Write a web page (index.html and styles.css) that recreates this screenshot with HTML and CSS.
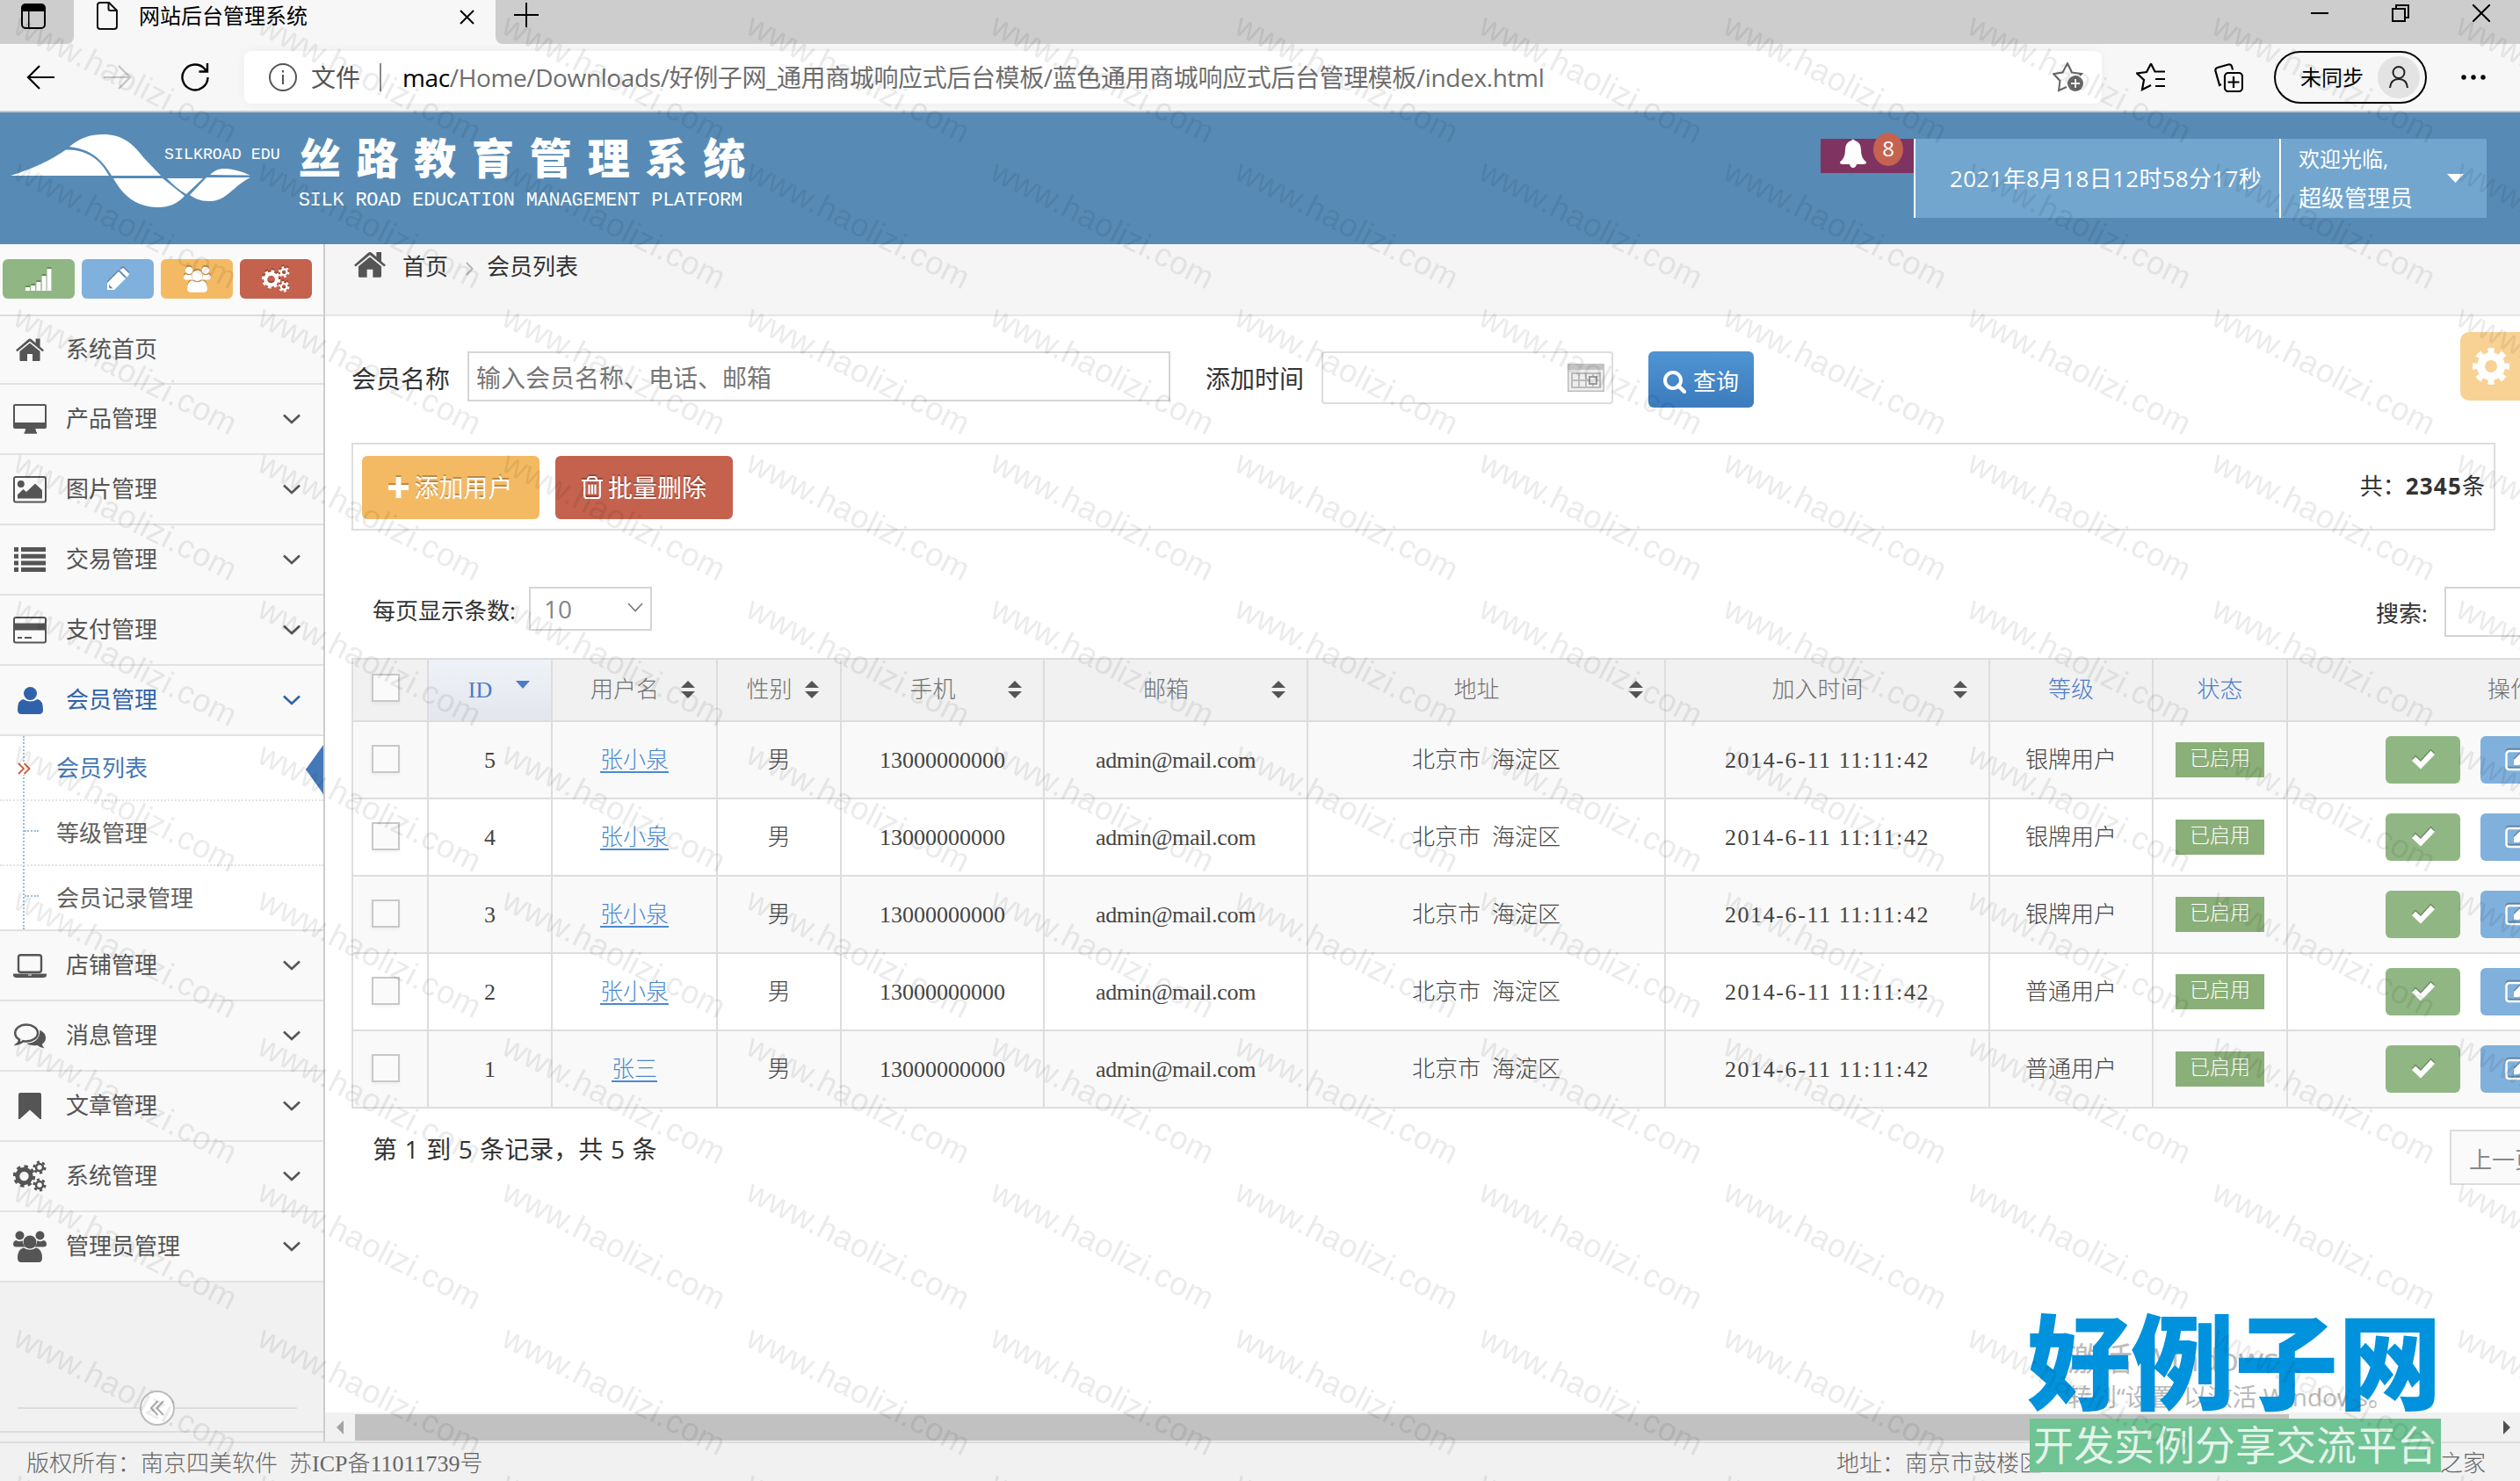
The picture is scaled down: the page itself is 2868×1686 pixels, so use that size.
FILE: index.html
```html
<!DOCTYPE html>
<html lang="zh-CN">
<head>
    <meta charset="UTF-8">
    <title>网站后台管理系统</title>
    <link rel="stylesheet" href="styles.css">
</head>
<body>
    <!-- shared icons -->
    <svg width="0" height="0" class="defs">
        <symbol id="i-home" viewBox="0 0 32 26"><path d="M0 13.6L14 1.4q2-1.6 4 0l4.6 4V.6h5v9.2l4.4 3.8-1.6 1.7L16 3.4 1.6 15.3zM4.4 15L16 5.4 27.6 15v10q0 1-1 1H19v-8h-6v8H5.4q-1 0-1-1z"/></symbol>
        <symbol id="i-desktop" viewBox="0 0 38 34"><path fill-rule="evenodd" d="M2 0h34q2 0 2 2v24q0 2-2 2H25.500q0 3 1.500 4.500v1.200H12.500v-1.200q1.500-1.500 1.500-4.500H2q-2 0-2-2V2q0-2 2-2zM2 2v19h34V2z"/></symbol>
        <symbol id="i-image" viewBox="0 0 38 31"><rect x="1" y="1" width="36" height="28.500" rx="2" fill="none" stroke="currentColor" stroke-width="2"/><circle cx="8.800" cy="9" r="4"/><path d="M5 25.500v-4.500l6.500-6 3.500 3 10-9.500 8 7.500v9.500z"/></symbol>
        <symbol id="i-list" viewBox="0 0 36 28"><path d="M0 0h5v5H0zM8 0h28v5H8zM0 7.700h5v5H0zM8 7.700h28v5H8zM0 15.400h5v5H0zM8 15.400h28v5H8zM0 23h5v5H0zM8 23h28v5H8z"/></symbol>
        <symbol id="i-card" viewBox="0 0 38 31"><rect x="1" y="1" width="36" height="28.500" rx="2" fill="none" stroke="currentColor" stroke-width="2"/><path d="M1 7.500h36v8H1zM5 23h5v2H5zM13 23h8v2h-8z"/></symbol>
        <symbol id="i-user" viewBox="0 0 29 31"><circle cx="14.500" cy="7.500" r="7.500"/><path d="M6.500 14q8 5 16 0 6.500 1 6.500 12 0 5-4.500 5H4.500Q0 31 0 26q0-11 6.500-12z"/></symbol>
        <symbol id="i-laptop" viewBox="0 0 38 27"><rect x="6" y="1.200" width="26" height="19.500" rx="2.500" fill="none" stroke="currentColor" stroke-width="2.400"/><path fill-rule="evenodd" d="M0 22.500h38v1.500q0 3-4 3H4q-4 0-4-3zm17 1v1h4v-1z"/></symbol>
        <symbol id="i-comments" viewBox="0 0 36 29"><path d="M14 1.500C21 1.500 27 5.500 27 11s-6 9.500-13 9.500q-2 0-3.500-.3Q7.500 23 3.500 23.500 6 21.500 6 18.500 1.200 15.500 1.200 11C1.200 5.500 7 1.500 14 1.500z" fill="none" stroke="currentColor" stroke-width="2.500"/><path d="M29.500 7.500q6.500 3.500 6.500 9 0 4.500-4 7 0 3 2.500 5-4.500-.5-8-3.500-8 1-12.500-2.200Q29 22.500 29.500 7.500z"/></symbol>
        <symbol id="i-bookmark" viewBox="0 0 26 30"><path d="M2 0h22q2 0 2 2v28h-1.500L13 19.500 1.500 30H0V2q0-2 2-2z"/></symbol>
        <symbol id="i-cogs" viewBox="0 0 38 36">
            <g fill="none" stroke="currentColor">
                <circle cx="12.500" cy="18" r="7.700" stroke-width="5"/><circle cx="12.500" cy="18" r="11" pathLength="16" stroke-dasharray="1 1" stroke-width="3.500"/>
                <circle cx="30" cy="8" r="4" stroke-width="2.600"/><circle cx="30" cy="8" r="6.300" pathLength="12" stroke-dasharray="1 1" stroke-width="2.500"/>
                <circle cx="30" cy="28" r="4" stroke-width="2.600"/><circle cx="30" cy="28" r="6.300" pathLength="12" stroke-dasharray="1 1" stroke-width="2.500"/>
            </g>
        </symbol>
        <symbol id="i-users" viewBox="0 0 38 36"><circle cx="7.500" cy="5.500" r="5"/><circle cx="30.500" cy="5.500" r="5"/><circle cx="19" cy="13" r="7.500"/><path d="M3.500 11q4 2.500 7 0 .3 5 3.500 7.500H3.500Q0 18.500 0 15.500q0-4 3.500-4.500zM34.500 11q-4 2.500-7 0-.3 5-3.500 7.500h10.500q3.500 0 3.500-3 0-4-3.500-4.500zM12 19.500q7 4.500 14 0 7 1.500 7 11.500 0 5-4 5H9q-4 0-4-5 0-10 7-11.500z"/></symbol>
        <symbol id="i-gear" viewBox="0 0 42 42"><g fill="none" stroke="currentColor"><circle cx="21" cy="21" r="11.500" stroke-width="9"/><circle cx="21" cy="21" r="18" pathLength="160" stroke-dasharray="10 10" stroke-dashoffset="5" stroke-width="6"/></g></symbol>
        <symbol id="i-down" viewBox="0 0 20 12"><path d="M1 1.500l9 8.500 9-8.500" fill="none" stroke="currentColor" stroke-width="2.600"/></symbol>
        <symbol id="i-sort" viewBox="0 0 16 20"><path d="M0 8l8-8 8 8zM0 12l8 8 8-8z"/></symbol>
        <symbol id="i-check" viewBox="0 0 26 22"><path d="M0 12l4-4.500 6 5.500L21.500.5 26 5 10 21.500z"/></symbol>
        <symbol id="i-edit" viewBox="0 0 30 26"><path d="M22 3H5Q1.500 3 1.500 6.500v14Q1.500 24 5 24h14q3.500 0 3.500-3.500V17" fill="none" stroke="currentColor" stroke-width="2.600"/><path d="M10 19v-6L22.500 1l6 6L16 19z"/></symbol>
        <symbol id="i-trash" viewBox="0 0 24 26"><path d="M0 5h24M7 5q0-4 3-4h4q3 0 3 4M3.200 5v17q0 3 2.500 3h12.600q2.500 0 2.500-3V5M8.500 9.500v11M12 9.500v11M15.500 9.500v11" fill="none" stroke="currentColor" stroke-width="2.200"/></symbol>
    </svg>

    <div class="page">
        <!-- browser window -->
        <div class="titlebar">
            <div class="tab-menu"><svg width="28" height="29" viewBox="0 0 28 29"><rect x="1" y="1" width="26" height="27" rx="4" fill="none" stroke="#000" stroke-width="2"/><path d="M1 4q0-3 3-3h20q3 0 3 3v5H1zM8 9h1.500v19H8z"/></svg></div>
            <div class="browser-tab">
                <svg width="24" height="32" viewBox="0 0 24 32"><path d="M4 1h10l9 9v18q0 3-3 3H4q-3 0-3-3V4q0-3 3-3zM13.500 1v7q0 2 2 2H23" fill="none" stroke="#111" stroke-width="2"/></svg>
                <span>网站后台管理系统</span>
                <svg width="17" height="17" viewBox="0 0 17 17"><path d="M1 1l15 15M16 1L1 16" stroke="#000" stroke-width="2"/></svg>
            </div>
            <svg class="tab-add" width="28" height="28" viewBox="0 0 28 28"><path d="M14 0v28M0 14h28" stroke="#000" stroke-width="2"/></svg>
            <div class="win-btns">
                <svg width="20" height="20" viewBox="0 0 20 20"><path d="M0 10h20" stroke="#000" stroke-width="2"/></svg>
                <svg width="20" height="20" viewBox="0 0 20 20"><path d="M1 5h14v14H1zM5 5V1h14v14h-4" fill="none" stroke="#000" stroke-width="2"/></svg>
                <svg width="20" height="20" viewBox="0 0 20 20"><path d="M0 0l20 20M20 0L0 20" stroke="#000" stroke-width="2"/></svg>
            </div>
        </div>
        <div class="toolbar">
            <div class="nav-btns">
                <svg width="32" height="28" viewBox="0 0 32 28"><path d="M32 14H2M15 1L2 14l13 13" fill="none" stroke="#000" stroke-width="2.200"/></svg>
                <svg width="32" height="28" viewBox="0 0 32 28"><path d="M0 14h30M17 1l13 13-13 13" fill="none" stroke="#c4c4c4" stroke-width="2.200"/></svg>
                <svg width="32" height="32" viewBox="0 0 32 32"><path d="M30.500 16A14.500 14.500 0 1 1 27 6.500l2.500 3M30 0v9.500h-9.500" fill="none" stroke="#000" stroke-width="2.400"/></svg>
            </div>
            <div class="address">
                <svg width="32" height="32" viewBox="0 0 32 32"><circle cx="16" cy="16" r="15" fill="none" stroke="#555" stroke-width="2"/><path d="M15 13h2v11h-2zM15 8h2v2.500h-2z" fill="#555"/></svg>
                <span class="scheme">文件</span>
                <span class="url"><b>mac</b>/Home/Downloads/好例子网_通用商城响应式后台模板/蓝色通用商城响应式后台管理模板/index.html</span>
                <svg width="36" height="34" viewBox="0 0 36 34"><path d="M16 28l-9 4 1.500-11L1 13l10.500-1.500L17 1l5 10.500L33 13l-2 2" fill="none" stroke="#666" stroke-width="2"/><circle cx="26" cy="24" r="9" fill="#666"/><path d="M26 19v10M21 24h10" stroke="#fff" stroke-width="2"/></svg>
            </div>
            <svg class="tool-fav" width="34" height="32" viewBox="0 0 34 32"><path d="M17 25l-10 5 2-11-8-7.500 11-1.500 5-9.500 4.500 9H33M22 18h11M22 26h11" fill="none" stroke="#000" stroke-width="2.200"/></svg>
            <svg class="tool-col" width="33" height="33" viewBox="0 0 33 33"><rect x="12" y="11" width="20" height="21" rx="4" fill="none" stroke="#000" stroke-width="2.200"/><path d="M22 15v13M15.500 21.500h13M8 24L6 25 1.500 9q-.8-3 2-4L16 1.500q3-.7 4 2l1 4" fill="none" stroke="#000" stroke-width="2.200"/></svg>
            <div class="profile">
                <span>未同步</span>
                <i><svg width="24" height="26" viewBox="0 0 24 26"><circle cx="12" cy="7.500" r="6.500" fill="none" stroke="#222" stroke-width="2"/><path d="M2 25q1-10 10-10t10 10" fill="none" stroke="#222" stroke-width="2"/></svg></i>
            </div>
            <svg class="tool-more" width="28" height="6" viewBox="0 0 28 6"><circle cx="3" cy="3" r="2.700"/><circle cx="14" cy="3" r="2.700"/><circle cx="25" cy="3" r="2.700"/></svg>
        </div>

        <!-- header -->
        <div class="header">
            <div class="brand">
                <svg class="brand-mark" width="274" height="84" viewBox="0 0 274 84">
                    <path fill="#fff" d="M0 47C25 39 45 30 63 17.500 88 17 103 30 112 47z"/>
                    <path fill="#fff" d="M67 14C80 3 92 0 105 0c22 0 34 10 46 26l20 21H115C105 30 93 17 67 14z"/>
                    <path fill="#fff" d="M117 50h56l25 20c-8 9-18 13-30 13-28 0-42-17-51-33z"/>
                    <path fill="#fff" d="M178 50h41l-19 18c-9-5-16-12-22-18zM227 46c6-6 11-7 17-7 10 0 20 4 29 7.500z"/>
                    <path fill="#fff" d="M223 49h50c-23 12-26 27-48 27-9 0-15-3-21-7z"/>
                </svg>
                <span class="brand-en">SILKROAD EDU</span>
                <div class="brand-text">
                    <div class="brand-title">丝路教育管理系统</div>
                    <div class="brand-sub">SILK ROAD EDUCATION MANAGEMENT PLATFORM</div>
                </div>
            </div>
            <div class="header-right">
                <div class="bell">
                    <svg width="30" height="34" viewBox="0 0 30 34"><path fill="#fff" d="M13 2q2-3 4 0 7 2 7 11 0 9 6 13.500Q30 29 27 29H19q-1 4-4 4t-4-4H3q-3 0-3-2.500Q6 22 6 13 6 4 13 2z"/></svg>
                    <span>8</span>
                </div>
                <div class="date">2021年8月18日12时58分17秒</div>
                <div class="welcome">
                    <div><small>欢迎光临,</small><br>超级管理员</div>
                    <svg width="19" height="10" viewBox="0 0 19 10"><path d="M0 0h19l-9.500 10z" fill="#fff"/></svg>
                </div>
            </div>
        </div>

        <div class="main">
            <div class="sidebar">
                <div class="shortcuts">
                    <span class="btn-green"><svg width="30" height="26" viewBox="0 0 30 26"><path d="M0 22h5v4H0zM6.200 20h5v6h-5zM12.400 16h5v10h-5zM18.600 9h5v17h-5zM24.500 1h5v25h-5z"/></svg></span>
                    <span class="btn-blue"><svg width="26" height="26" viewBox="0 0 26 26"><path fill-rule="evenodd" d="M1 25v-8L14 4l8 8L9 25zM15.500 2.700L18 .5q1-1 2 0L25.500 6q1 1 0 2l-2 2.500zM3 18.500V22l1.500 1.500h3z"/></svg></span>
                    <span class="btn-orange"><svg width="31" height="30"><use href="#i-users"/></svg></span>
                    <span class="btn-red"><svg width="32" height="30"><use href="#i-cogs"/></svg></span>
                </div>
                <ul class="nav">
                    <li><a class="first"><i><svg width="32" height="26"><use href="#i-home"/></svg></i><span>系统首页</span></a></li>
                    <li><a><i><svg width="38" height="34"><use href="#i-desktop"/></svg></i><span>产品管理</span><svg width="20" height="12"><use href="#i-down"/></svg></a></li>
                    <li><a><i><svg width="38" height="31"><use href="#i-image"/></svg></i><span>图片管理</span><svg width="20" height="12"><use href="#i-down"/></svg></a></li>
                    <li><a><i><svg width="36" height="28"><use href="#i-list"/></svg></i><span>交易管理</span><svg width="20" height="12"><use href="#i-down"/></svg></a></li>
                    <li><a><i><svg width="38" height="31"><use href="#i-card"/></svg></i><span>支付管理</span><svg width="20" height="12"><use href="#i-down"/></svg></a></li>
                    <li class="open"><a><i><svg width="29" height="31"><use href="#i-user"/></svg></i><span>会员管理</span><svg width="20" height="12"><use href="#i-down"/></svg></a>
                        <ul class="submenu">
                            <li class="active"><svg width="15" height="14" viewBox="0 0 15 14"><path d="M1 1l6 6-6 6M7.500 1l6 6-6 6" fill="none" stroke="#c86139" stroke-width="1.800"/></svg>会员列表</li>
                            <li>等级管理</li>
                            <li>会员记录管理</li>
                        </ul>
                    </li>
                    <li><a><i><svg width="38" height="27"><use href="#i-laptop"/></svg></i><span>店铺管理</span><svg width="20" height="12"><use href="#i-down"/></svg></a></li>
                    <li><a><i><svg width="36" height="29"><use href="#i-comments"/></svg></i><span>消息管理</span><svg width="20" height="12"><use href="#i-down"/></svg></a></li>
                    <li><a><i><svg width="26" height="30"><use href="#i-bookmark"/></svg></i><span>文章管理</span><svg width="20" height="12"><use href="#i-down"/></svg></a></li>
                    <li><a><i><svg width="38" height="36"><use href="#i-cogs"/></svg></i><span>系统管理</span><svg width="20" height="12"><use href="#i-down"/></svg></a></li>
                    <li><a><i><svg width="38" height="36"><use href="#i-users"/></svg></i><span>管理员管理</span><svg width="20" height="12"><use href="#i-down"/></svg></a></li>
                </ul>
                <div class="collapse"><i><svg width="16" height="18" viewBox="0 0 16 18"><path d="M8.500 1L1 9l7.500 8M15 1L7.500 9l7.500 8" fill="none" stroke="#aaa" stroke-width="2"/></svg></i></div>
            </div>

            <div class="content">
                <div class="breadcrumb">
                    <svg width="36" height="30"><use href="#i-home"/></svg>
                    <span>首页</span>
                    <svg width="9" height="16" viewBox="0 0 9 16"><path d="M1 1l6.500 7L1 15" fill="none" stroke="#b2b6bf" stroke-width="2"/></svg>
                    <span>会员列表</span>
                </div>

                <div class="search">
                    <label>会员名称</label>
                    <input class="name" type="text" placeholder="输入会员名称、电话、邮箱">
                    <label>添加时间</label>
                    <div class="datebox"><svg width="42" height="32" viewBox="0 0 42 32"><rect x=".7" y=".7" width="40.600" height="30.600" fill="#eee" stroke="#bbb" stroke-width="1.500"/><path fill="#c4c4c4" d="M0 0h42v7H0z"/><path d="M5 11h32v16H5zM5 19h32M13 11v16M21 11v16M29 11v16" fill="none" stroke="#bbb" stroke-width="2"/><rect x="25" y="15" width="8" height="8" fill="#eee" stroke="#999" stroke-width="2"/></svg></div>
                    <button class="query"><svg width="26" height="26" viewBox="0 0 26 26"><circle cx="11" cy="11" r="9" fill="none" stroke="#fff" stroke-width="4"/><path d="M17 17l7 7" stroke="#fff" stroke-width="4.500" stroke-linecap="round"/></svg>查询</button>
                </div>

                <div class="actions">
                    <button class="btn-orange"><svg width="23" height="24" viewBox="0 0 23 24"><path d="M8.500 0h6v9H23v6h-8.500v9h-6v-9H0V9h8.500z"/></svg>添加用户</button>
                    <button class="btn-red"><svg width="24" height="26"><use href="#i-trash"/></svg>批量删除</button>
                    <span class="total">共：<b>2345</b>条</span>
                </div>

                <div class="table-top">
                    <span>每页显示条数:</span>
                    <div class="length">10<svg width="18" height="11" viewBox="0 0 18 11"><path d="M1 1l8 8.500L17 1" fill="none" stroke="#777" stroke-width="1.600"/></svg></div>
                    <span class="search-label">搜索:</span>
                    <input type="text">
                </div>

                <table>
                    <colgroup><col class="c1"><col class="c2"><col class="c3"><col class="c4"><col class="c5"><col class="c6"><col class="c7"><col class="c8"><col class="c9"><col class="c10"><col class="c11"></colgroup>
                    <thead>
                        <tr>
                            <th><i class="check"></i></th>
                            <th class="sorted"><div class="sort">ID<svg width="16" height="20" viewBox="0 0 16 20"><path d="M0 0h16l-8 9z"/></svg></div></th>
                            <th><div class="sort">用户名<svg width="16" height="20"><use href="#i-sort"/></svg></div></th>
                            <th><div class="sort">性别<svg width="16" height="20"><use href="#i-sort"/></svg></div></th>
                            <th><div class="sort">手机<svg width="16" height="20"><use href="#i-sort"/></svg></div></th>
                            <th><div class="sort">邮箱<svg width="16" height="20"><use href="#i-sort"/></svg></div></th>
                            <th><div class="sort">地址<svg width="16" height="20"><use href="#i-sort"/></svg></div></th>
                            <th><div class="sort">加入时间<svg width="16" height="20"><use href="#i-sort"/></svg></div></th>
                            <th class="blue">等级</th>
                            <th class="blue">状态</th>
                            <th>操作</th>
                        </tr>
                    </thead>
                    <tbody>
                        <tr><td><i class="check"></i></td><td>5</td><td><u>张小泉</u></td><td>男</td><td>13000000000</td><td class="mail">admin@mail.com</td><td>北京市<s></s>海淀区</td><td class="time">2014-6-11 11:11:42</td><td>银牌用户</td><td><span class="badge">已启用</span></td><td class="ops"><span class="btn-green"><svg width="26" height="22"><use href="#i-check"/></svg></span><span class="btn-blue"><svg width="30" height="26"><use href="#i-edit"/></svg></span></td></tr>
                        <tr><td><i class="check"></i></td><td>4</td><td><u>张小泉</u></td><td>男</td><td>13000000000</td><td class="mail">admin@mail.com</td><td>北京市<s></s>海淀区</td><td class="time">2014-6-11 11:11:42</td><td>银牌用户</td><td><span class="badge">已启用</span></td><td class="ops"><span class="btn-green"><svg width="26" height="22"><use href="#i-check"/></svg></span><span class="btn-blue"><svg width="30" height="26"><use href="#i-edit"/></svg></span></td></tr>
                        <tr><td><i class="check"></i></td><td>3</td><td><u>张小泉</u></td><td>男</td><td>13000000000</td><td class="mail">admin@mail.com</td><td>北京市<s></s>海淀区</td><td class="time">2014-6-11 11:11:42</td><td>银牌用户</td><td><span class="badge">已启用</span></td><td class="ops"><span class="btn-green"><svg width="26" height="22"><use href="#i-check"/></svg></span><span class="btn-blue"><svg width="30" height="26"><use href="#i-edit"/></svg></span></td></tr>
                        <tr><td><i class="check"></i></td><td>2</td><td><u>张小泉</u></td><td>男</td><td>13000000000</td><td class="mail">admin@mail.com</td><td>北京市<s></s>海淀区</td><td class="time">2014-6-11 11:11:42</td><td>普通用户</td><td><span class="badge">已启用</span></td><td class="ops"><span class="btn-green"><svg width="26" height="22"><use href="#i-check"/></svg></span><span class="btn-blue"><svg width="30" height="26"><use href="#i-edit"/></svg></span></td></tr>
                        <tr><td><i class="check"></i></td><td>1</td><td><u>张三</u></td><td>男</td><td>13000000000</td><td class="mail">admin@mail.com</td><td>北京市<s></s>海淀区</td><td class="time">2014-6-11 11:11:42</td><td>普通用户</td><td><span class="badge">已启用</span></td><td class="ops"><span class="btn-green"><svg width="26" height="22"><use href="#i-check"/></svg></span><span class="btn-blue"><svg width="30" height="26"><use href="#i-edit"/></svg></span></td></tr>
                    </tbody>
                </table>

                <div class="table-bottom">
                    <span>第 1 到 5 条记录，共 5 条</span>
                    <div class="prev">上一页</div>
                </div>

                <div class="hscroll">
                    <svg width="8" height="16" viewBox="0 0 8 16"><path d="M8 0v16L0 8z" fill="#a3a3a3"/></svg>
                    <div class="thumb"></div>
                    <svg width="8" height="16" viewBox="0 0 8 16"><path d="M0 0v16l8-8z" fill="#505050"/></svg>
                </div>

                <div class="settings"><svg width="42" height="42"><use href="#i-gear"/></svg></div>
            </div>
        </div>

        <div class="footer">
            <span>版权所有：南京四美软件<s></s>苏ICP备11011739号</span>
            <span class="addr"><span>地址：南京市鼓楼区</span><span>之家</span></span>
        </div>

        <div class="activate">
            <div>激活 Windows</div>
            <p>转到“设置”以激活 Windows。</p>
        </div>
        <div class="site-logo">
            <div>好例子网</div>
            <p>开发实例分享交流平台</p>
        </div>

        <svg class="watermark" width="2868" height="1686">
            <pattern id="wm" width="278" height="166" patternUnits="userSpaceOnUse">
                <text x="0" y="0" transform="translate(13 37) rotate(27)" textLength="279" font-size="37">www.haolizi.com</text>
            </pattern>
            <rect width="2868" height="1686" fill="url(#wm)"/>
        </svg>
    </div>
</body>
</html>
```
FILE: styles.css
```css
* {
    margin: 0;
    padding: 0;
    box-sizing: border-box;
}

body {
    width: 2868px;
    height: 1686px;
    overflow: hidden;
    background: #fff;
    font-family: 'Open Sans', 'Noto Sans CJK SC', sans-serif;
    font-size: 26px;
    line-height: 1.3;
    color: #333;
}

ul {
    list-style: none;
}

i, s {
    font-style: normal;
    text-decoration: none;
}

svg {
    fill: currentColor;
    flex: none;
    display: block;
}

button, input {
    font: inherit;
}

.defs {
    position: absolute;
}

.page {
    position: relative;
    width: 2868px;
    height: 1686px;
    display: flex;
    flex-direction: column;
    overflow: hidden;
}

/* browser window */
.titlebar {
    height: 50px;
    flex: none;
    display: flex;
    background: #f7f7f7;
    color: #000;
}

.tab-menu {
    width: 84px;
    padding: 4px 0 0 24px;
    background: #cdcdcd;
    border-bottom-right-radius: 8px;
}

.browser-tab {
    width: 480px;
    display: flex;
    align-items: flex-start;
    padding: 2px 24px 0 26px;
}

.browser-tab span {
    flex: 1;
    margin-left: 24px;
    font-size: 24px;
    line-height: 32px;
}

.browser-tab svg:last-child {
    margin-top: 9px;
}

.tab-add {
    width: 50px;
    height: 50px;
    padding: 3px 1px 19px 21px;
    background: #cdcdcd;
    border-bottom-left-radius: 8px;
}

.win-btns {
    flex: 1;
    display: flex;
    justify-content: flex-end;
    gap: 72px;
    padding: 5px 34px 0 0;
    background: #cdcdcd;
}

.toolbar {
    height: 78px;
    flex: none;
    display: flex;
    align-items: center;
    background: #f7f7f7;
    border-bottom: 2px solid #c8c8c8;
    color: #000;
}

.nav-btns {
    width: 278px;
    display: flex;
    align-items: center;
    gap: 56px;
    padding-left: 30px;
}

.address {
    width: 2114px;
    height: 60px;
    display: flex;
    align-items: center;
    padding: 0 20px 0 28px;
    background: #fff;
    border-radius: 8px;
    box-shadow: 0 0 12px rgba(0, 0, 0, 0.05);
    font-size: 28px;
}

.scheme {
    margin-left: 16px;
    padding-right: 22px;
    border-right: 2px solid #888;
    line-height: 32px;
    color: #555;
}

.url {
    flex: 1;
    margin-left: 24px;
    color: #6e6e6e;
    letter-spacing: -0.38px;
}

.url b {
    font-weight: normal;
    color: #000;
}

.tool-fav {
    margin-left: 39px;
}

.tool-col {
    margin-left: 55px;
}

.profile {
    width: 174px;
    height: 60px;
    display: flex;
    align-items: center;
    margin-left: 35px;
    padding-left: 28px;
    border: 2px solid #000;
    border-radius: 30px;
    font-size: 24px;
}

.profile i {
    width: 48px;
    height: 48px;
    display: flex;
    align-items: center;
    justify-content: center;
    margin-left: 16px;
    border-radius: 50%;
    background: #e3e3e3;
}

.tool-more {
    margin-left: 39px;
}

/* header */
.header {
    height: 150px;
    flex: none;
    display: flex;
    justify-content: space-between;
    background: #578bb5;
    color: #fff;
}

.brand {
    display: flex;
    padding: 25px 0 0 12px;
}

.brand-en {
    margin: 11px 0 0 -99px;
    font: 18.3px/24px 'Liberation Mono', monospace;
}

.brand-text {
    margin-left: 21px;
}

.brand-title {
    height: 54px;
    font: 900 48px/48px 'Noto Sans CJK SC', sans-serif;
    letter-spacing: 17.8px;
}

.brand-sub {
    margin-top: 9px;
    font: 22px/26px 'Liberation Mono', monospace;
    letter-spacing: -0.25px;
}

.header-right {
    display: flex;
    align-items: flex-start;
    margin-right: 38px;
    padding-top: 30px;
}

.bell {
    position: relative;
    width: 106px;
    height: 39px;
    padding-left: 22px;
    background: #7f3361;
}

.bell span {
    position: absolute;
    left: 60px;
    top: -7px;
    width: 34px;
    height: 38px;
    border-radius: 50%;
    background: #c56250;
    font-size: 24px;
    line-height: 36px;
    text-align: center;
}

.date {
    width: 416px;
    height: 90px;
    padding-left: 39px;
    border-left: 2px solid #fff;
    background: #72a6cf;
    letter-spacing: 0.3px;
    line-height: 90px;
    white-space: nowrap;
}

.welcome {
    width: 236px;
    height: 90px;
    display: flex;
    align-items: center;
    justify-content: space-between;
    padding: 0 26px 0 20px;
    border-left: 2px solid #fff;
    background: #72a6cf;
    line-height: 45px;
}

.welcome small {
    font-size: 24px;
}

/* sidebar */
.main {
    height: 1363px;
    flex: none;
    display: flex;
}

.sidebar {
    width: 370px;
    flex: none;
    background: #f1f1f1;
    border-right: 2px solid #ccc;
}

.shortcuts {
    height: 82px;
    display: flex;
    gap: 8px;
    padding: 17px 0 0 3px;
    background: #fafafa;
    border-bottom: 2px solid #ddd;
}

.shortcuts span {
    width: 82px;
    height: 45px;
    display: flex;
    align-items: center;
    justify-content: center;
    border-radius: 6px;
    color: #fff;
}

.btn-green {
    background: #90b783;
}

.btn-blue {
    background: #80b0dc;
}

.btn-orange {
    background: #f4ba63;
}

.btn-red {
    background: #c4624e;
}

.shortcuts svg, .actions svg, .ops svg {
    filter: drop-shadow(0 -2px 0 rgba(0, 0, 0, 0.25));
}

.nav > li {
    border-bottom: 2px solid #e2e2e2;
}

.nav a {
    height: 78px;
    display: flex;
    align-items: center;
    padding: 0 26px 0 15px;
    background: #f9f9f9;
    color: #555;
}

.nav .first {
    height: 76px;
}

.nav a i {
    width: 38px;
    display: flex;
    justify-content: center;
}

.nav a span {
    flex: 1;
    margin-left: 22px;
}

.nav .open a {
    border-bottom: 2px solid #e2e2e2;
    height: 80px;
    color: #2f62a8;
}

.submenu {
    position: relative;
    background: #fff;
}

.submenu::before {
    content: '';
    position: absolute;
    left: 26px;
    top: 0;
    bottom: 0;
    border-left: 2px dotted #9dbdd6;
}

.submenu li {
    position: relative;
    height: 74px;
    padding-left: 64px;
    line-height: 73px;
    color: #616161;
    border-bottom: 2px dotted #e2e2e2;
}

.submenu li:last-child {
    height: 72px;
    border: none;
}

.submenu li:not(.active)::before {
    content: '';
    position: absolute;
    left: 28px;
    top: 33px;
    width: 16px;
    border-top: 2px dotted #9dbdd6;
}

.submenu .active {
    color: #4479b8;
}

.submenu .active::after {
    content: '';
    position: absolute;
    right: 0;
    top: 10px;
    border: 28px solid transparent;
    border-left: 0;
    border-right: 20px solid #4479b8;
}

.submenu svg {
    position: absolute;
    left: 20px;
    top: 30px;
    background: #fff;
}

.collapse {
    height: 171px;
    display: flex;
    align-items: center;
    justify-content: center;
    padding: 116px 30px 0 20px;
    border-bottom: 2px solid #ddd;
}

.collapse::before, .collapse::after {
    content: '';
    flex: 1;
    border-top: 2px solid #ddd;
}

.collapse i {
    width: 40px;
    height: 40px;
    display: flex;
    align-items: center;
    justify-content: center;
    border: 2px solid #bbb;
    border-radius: 50%;
    background: #fff;
}

/* content */
.content {
    position: relative;
    flex: 1;
    min-width: 0;
    display: flex;
    flex-direction: column;
    overflow: hidden;
}

.breadcrumb {
    height: 82px;
    flex: none;
    display: flex;
    align-items: flex-start;
    padding: 8px 0 0 33px;
    background: #f5f5f5;
    border-bottom: 2px solid #e5e5e5;
    line-height: 34px;
}

.breadcrumb > svg:first-child {
    color: #555;
    margin-right: 19px;
}

.breadcrumb svg:nth-of-type(2) {
    margin: 12px 15px 0 20px;
}

.search {
    height: 144px;
    flex: none;
    display: flex;
    align-items: flex-start;
    padding: 40px 0 0 30px;
    font-size: 28px;
}

.search label {
    line-height: 62px;
    white-space: nowrap;
}

.search .name {
    width: 800px;
    height: 57px;
    margin: 0 40px 0 20px;
    padding: 2px 8px 0;
    border: 2px solid #d5d5d5;
    background: #fff;
}

.search .name::placeholder {
    color: #777;
    opacity: 1;
}

.datebox {
    width: 332px;
    height: 60px;
    display: flex;
    justify-content: flex-end;
    margin-left: 20px;
    padding: 12px 8px 0 0;
    border: 2px solid #ddd;
    border-radius: 4px;
}

.query {
    width: 120px;
    height: 64px;
    display: flex;
    align-items: center;
    justify-content: center;
    gap: 8px;
    margin-left: 40px;
    padding-top: 6px;
    border: none;
    border-radius: 6px;
    background: linear-gradient(#5094d3, #3b7bbd);
    color: #fff;
    font-size: 26px;
}

.actions {
    width: 2440px;
    height: 100px;
    flex: none;
    display: flex;
    gap: 18px;
    margin-left: 30px;
    padding: 13px 10px;
    border: 2px solid #ddd;
}

.actions button {
    width: 202px;
    height: 72px;
    display: flex;
    align-items: center;
    justify-content: center;
    gap: 6px;
    border: none;
    border-radius: 6px;
    color: #fff;
    font-size: 28px;
    text-shadow: 0 -2px 0 rgba(0, 0, 0, 0.25);
}

.total {
    margin-left: auto;
    line-height: 68px;
}

.total b {
    letter-spacing: 1.2px;
}

.table-top {
    height: 145px;
    flex: none;
    display: flex;
    align-items: flex-start;
    padding: 64px 0 0 54px;
}

.table-top span {
    width: 178px;
    flex: none;
    line-height: 54px;
    white-space: nowrap;
}

.length {
    width: 140px;
    height: 50px;
    flex: none;
    display: flex;
    align-items: center;
    justify-content: space-between;
    padding: 0 8px 0 15px;
    border: 2px solid #d5d5d5;
    color: #858585;
    font-size: 28px;
}

.length svg {
    margin-top: -4px;
}

.table-top .search-label {
    width: 78px;
    margin-left: 1962px;
    line-height: 60px;
}

.table-top input {
    width: 250px;
    height: 57px;
    flex: none;
    border: 2px solid #d5d5d5;
}

table {
    width: 2710px;
    flex: none;
    margin-left: 30px;
    table-layout: fixed;
    border-collapse: collapse;
    font-family: 'Liberation Serif', 'Noto Sans CJK SC', serif;
    font-weight: 300;
    line-height: 30px;
    text-align: center;
}

.c1 { width: 86px; }
.c2 { width: 141px; }
.c3 { width: 188px; }
.c4 { width: 141px; }
.c5 { width: 231px; }
.c6 { width: 300px; }
.c7 { width: 407px; }
.c8 { width: 369px; }
.c9 { width: 186px; }
.c10 { width: 153px; }
.c11 { width: 508px; }

th, td {
    border: 2px solid #ddd;
}

th {
    height: 71px;
    background: #f1f1f1;
    color: #707070;
    font-weight: 300;
}

td {
    height: 88px;
    padding-top: 2px;
    color: #444;
}

tbody tr:nth-child(odd) {
    background: #f9f9f9;
}

.sorted {
    background: linear-gradient(#eff3f8, #e3e7ed);
}

.sorted, .blue {
    color: #4a7cc7;
}

.sort {
    display: flex;
    align-items: center;
    justify-content: center;
    position: relative;
    padding-right: 22px;
}

.sort svg {
    position: absolute;
    right: 24px;
    top: 4px;
    color: #555;
}

.sorted svg {
    color: #4a7cc7;
}

.check {
    width: 32px;
    height: 32px;
    display: block;
    margin: 0 auto 5px 21px;
    border: 2px solid #c8c8c8;
    background: #fafafa;
    box-shadow: 0 2px 4px rgba(0, 0, 0, 0.05);
}

u {
    color: #4b89d0;
    text-underline-offset: 4px;
}

s {
    display: inline-block;
    width: 13px;
}

.mail {
    letter-spacing: -0.3px;
}

.time {
    letter-spacing: 1.6px;
}

.badge {
    display: inline-block;
    width: 101px;
    height: 40px;
    background: #8aaf78;
    color: #fff;
    font-size: 23px;
    line-height: 37px;
}

td .badge {
    margin-top: -2px;
}

.ops {
    padding: 0 0 0 111px;
}

.ops span {
    float: left;
    width: 85px;
    height: 54px;
    display: flex;
    align-items: center;
    justify-content: center;
    margin-right: 23px;
    border-radius: 6px;
    color: #fff;
}

.table-bottom {
    flex: 1;
    display: flex;
    align-items: flex-start;
    justify-content: space-between;
    padding: 24px 0 0 54px;
    font-size: 28px;
    line-height: 44px;
    word-spacing: 1.3px;
}

.prev {
    width: 130px;
    height: 63px;
    flex: none;
    margin-right: -50px;
    padding-left: 20px;
    border: 2px solid #ddd;
    background: #fafafa;
    color: #888;
    font-size: 26px;
    line-height: 64px;
    white-space: nowrap;
}

.hscroll {
    height: 33px;
    flex: none;
    display: flex;
    align-items: center;
    padding: 0 11px 0 13px;
    background: #f1f1f1;
}

.thumb {
    width: 2201px;
    height: 30px;
    margin: 0 auto 0 13px;
    background: #c1c1c1;
}

.settings {
    position: absolute;
    right: 0;
    top: 100px;
    width: 68px;
    height: 78px;
    display: flex;
    align-items: center;
    padding-left: 14px;
    border-radius: 10px 0 0 10px;
    background: #f8d294;
    color: #fff;
}

.footer {
    height: 45px;
    flex: none;
    display: flex;
    justify-content: space-between;
    padding: 2px 39px 0 30px;
    background: #f1f1f1;
    border-top: 2px solid #ddd;
    color: #666;
    font-family: 'Liberation Serif', 'Noto Sans CJK SC', serif;
    font-weight: 300;
    line-height: 44px;
}

.addr {
    width: 739px;
    display: flex;
    justify-content: space-between;
}

/* overlays */
.activate {
    position: absolute;
    left: 2353px;
    top: 1524px;
    color: #bbb;
    font-size: 37px;
    line-height: 46px;
    white-space: nowrap;
}

.activate p {
    font-size: 28px;
    line-height: 40px;
}

.site-logo {
    position: absolute;
    left: 2307px;
    top: 1486px;
    width: 471px;
}

.site-logo div {
    height: 129px;
    font: 900 118px/117px 'Noto Sans CJK SC', sans-serif;
    color: #0092dd;
    white-space: nowrap;
}

.site-logo p {
    height: 61px;
    margin-left: 3px;
    background: #70c393;
    color: #e4f5eb;
    font-size: 46px;
    line-height: 58px;
    text-align: center;
    white-space: nowrap;
}

.watermark {
    position: absolute;
    left: 0;
    top: 0;
    pointer-events: none;
    color: rgba(0, 0, 0, 0.08);
    font-family: 'Liberation Sans', sans-serif;
}
```
